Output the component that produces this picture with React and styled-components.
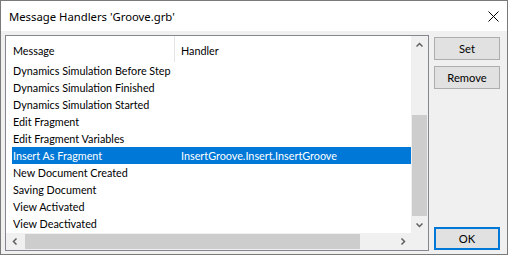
import React from "react";
import styled, { createGlobalStyle } from "styled-components";

const FONT = `Lato, "Noto Sans", sans-serif`;
const TITLE_FONT = `"Noto Sans", "Open Sans", sans-serif`;

const GlobalStyle = createGlobalStyle`
  html, body { margin: 0; padding: 0; background: #ffffff; }
  body { font-family: ${FONT}; font-size: 10.8px; color: #000; }
  * { box-sizing: border-box; }
`;

const Window = styled.div`
  width: 508px;
  height: 255px;
  border: 1px solid #7a7a7a;
  background: #f0f0f0;
  display: flex;
  flex-direction: column;
`;

const TitleBar = styled.div`
  height: 30px;
  background: #ffffff;
  display: flex;
  align-items: center;
  justify-content: space-between;
  padding: 0 8px 0 8px;
`;

const Title = styled.span`
  font-family: ${TITLE_FONT};
  font-size: 11.3px;
  line-height: 16px;
  color: #000;
  padding-top: 1px;
`;

const CloseIcon = styled.svg`
  width: 11px;
  height: 11px;
  display: block;
`;

const Client = styled.div`
  flex: 1;
  display: flex;
  gap: 5px;
  padding: 4px 7px 3px 4px;
`;

const ListBox = styled.div`
  width: 424px;
  height: 216px;
  border: 1px solid #828790;
  background: #ffffff;
  display: grid;
  grid-template-columns: 1fr 17px;
  grid-template-rows: 1fr 17px;
`;

const ListView = styled.div`
  display: flex;
  flex-direction: column;
  overflow: hidden;
`;

const Header = styled.div`
  height: 26px;
  display: flex;
`;

const HeaderCell = styled.div`
  display: flex;
  align-items: center;
  padding-left: ${(p) => p.$pad}px;
  width: ${(p) => (p.$width ? `${p.$width}px` : "auto")};
  flex: ${(p) => (p.$width ? "none" : "1")};
  border-right: ${(p) => (p.$divider ? "1px solid #e5e5e5" : "none")};
  padding-top: 3px;
`;

const Row = styled.div`
  height: 17px;
  margin-left: 6px;
  display: flex;
  align-items: center;
  background: ${(p) => (p.$selected ? "#0078d7" : "transparent")};
  color: ${(p) => (p.$selected ? "#ffffff" : "#000000")};
  white-space: nowrap;
`;

const Cell = styled.div`
  width: ${(p) => (p.$width ? `${p.$width}px` : "auto")};
  flex: ${(p) => (p.$width ? "none" : "1")};
  padding-left: ${(p) => p.$pad}px;
  overflow: visible;
`;

const VScroll = styled.div`
  background: #f0f0f0;
  display: flex;
  flex-direction: column;
`;

const HScroll = styled.div`
  background: #f0f0f0;
  display: flex;
`;

const ArrowBtn = styled.div`
  width: 17px;
  height: 17px;
  flex: none;
  display: flex;
  align-items: center;
  justify-content: center;
`;

const VTrack = styled.div`
  flex: 1;
  display: flex;
  flex-direction: column;
  justify-content: flex-end;
  padding: 0 1px;
`;

const VThumb = styled.div`
  height: 101px;
  background: #cdcdcd;
`;

const HTrack = styled.div`
  flex: 1;
  display: flex;
  padding: 1px 0 1px 2px;
`;

const HThumb = styled.div`
  width: 335px;
  background: #cdcdcd;
`;

const Corner = styled.div`
  background: #f0f0f0;
`;

const ButtonColumn = styled.div`
  width: 66px;
  display: flex;
  flex-direction: column;
  gap: 6px;
  padding-top: 2px;
`;

const Spacer = styled.div`
  flex: 1;
`;

const Button = styled.button`
  height: 23px;
  width: 66px;
  background: #e1e1e1;
  border: ${(p) => (p.$default ? "2px solid #0078d7" : "1px solid #adadad")};
  font-family: ${FONT};
  font-size: 11.2px;
  color: #000;
  padding: 0;
  margin-bottom: ${(p) => (p.$default ? "1px" : "0")};
`;

const Chevron = ({ dir }) => {
  const paths = {
    up: "M0.5 4.5 L3.5 1.5 L6.5 4.5",
    down: "M0.5 1.5 L3.5 4.5 L6.5 1.5",
    left: "M4.5 0.5 L1.5 3.5 L4.5 6.5",
    right: "M1.5 0.5 L4.5 3.5 L1.5 6.5",
  };
  const vertical = dir === "up" || dir === "down";
  return (
    <svg width={vertical ? 7 : 6} height={vertical ? 6 : 7} viewBox={vertical ? "0 0 7 6" : "0 0 6 7"}>
      <path d={paths[dir]} fill="none" stroke="#606060" strokeWidth="1.5" />
    </svg>
  );
};

const rows = [
  ["Dynamics Simulation Before Step", ""],
  ["Dynamics Simulation Finished", ""],
  ["Dynamics Simulation Started", ""],
  ["Edit Fragment", ""],
  ["Edit Fragment Variables", ""],
  ["Insert As Fragment", "InsertGroove.Insert.InsertGroove"],
  ["New Document Created", ""],
  ["Saving Document", ""],
  ["View Activated", ""],
  ["View Deactivated", ""],
];

export default function App() {
  return (
    <>
      <GlobalStyle />
      <Window>
        <TitleBar>
          <Title>Message Handlers 'Groove.grb'</Title>
          <CloseIcon viewBox="0 0 11 11">
            <path d="M0.5 0.5 L10.5 10.5 M10.5 0.5 L0.5 10.5" stroke="#000" strokeWidth="1" fill="none" />
          </CloseIcon>
        </TitleBar>
        <Client>
          <ListBox>
            <ListView>
              <Header>
                <HeaderCell $width={169} $pad={7} $divider>Message</HeaderCell>
                <HeaderCell $pad={6}>Handler</HeaderCell>
              </Header>
              {rows.map(([msg, handler], i) => (
                <Row key={msg} $selected={i === 5}>
                  <Cell $width={163} $pad={1}>{msg}</Cell>
                  <Cell $pad={6}>{handler}</Cell>
                </Row>
              ))}
            </ListView>
            <VScroll>
              <ArrowBtn><Chevron dir="up" /></ArrowBtn>
              <VTrack><VThumb /></VTrack>
              <ArrowBtn><Chevron dir="down" /></ArrowBtn>
            </VScroll>
            <HScroll>
              <ArrowBtn><Chevron dir="left" /></ArrowBtn>
              <HTrack><HThumb /></HTrack>
              <ArrowBtn><Chevron dir="right" /></ArrowBtn>
            </HScroll>
            <Corner />
          </ListBox>
          <ButtonColumn>
            <Button>Set</Button>
            <Button>Remove</Button>
            <Spacer />
            <Button $default>OK</Button>
          </ButtonColumn>
        </Client>
      </Window>
    </>
  );
}
